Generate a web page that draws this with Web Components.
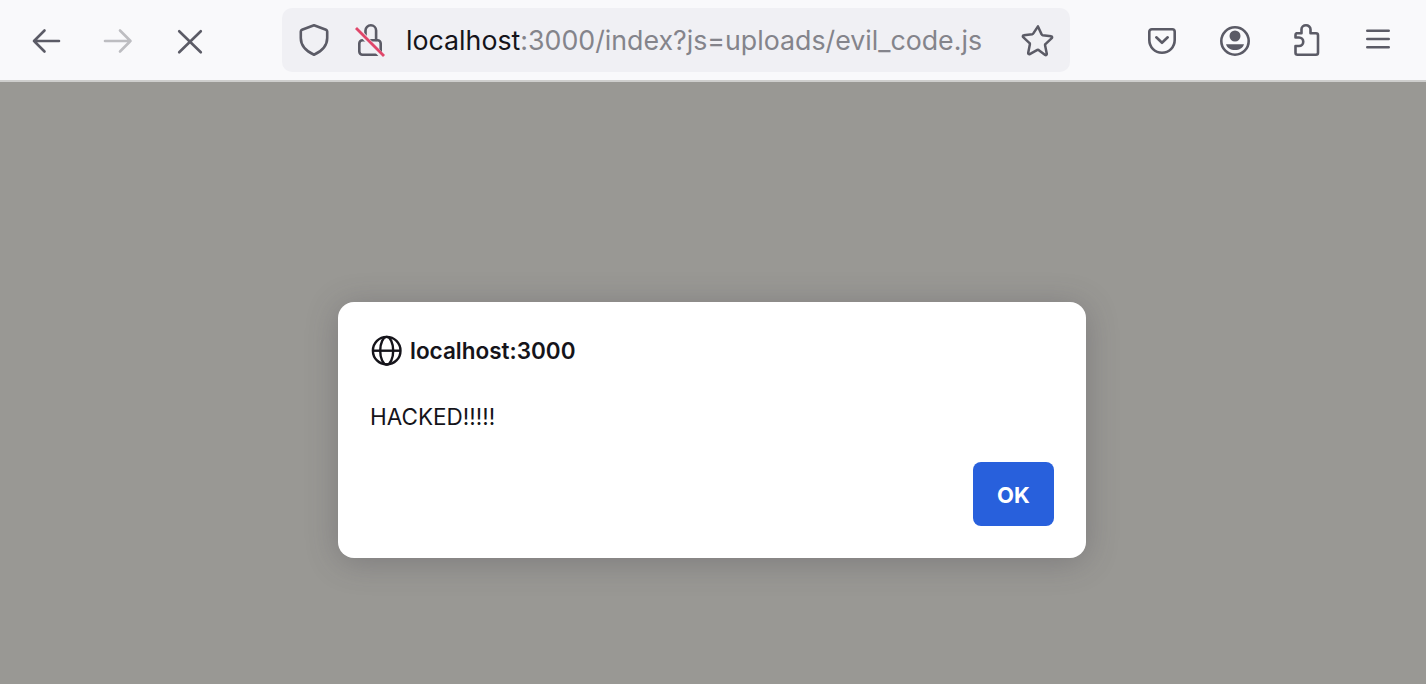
<!DOCTYPE html>
<html lang="en">
<head>
<meta charset="utf-8">
<title>localhost:3000</title>
<style>
  html, body { margin: 0; height: 100%; background: #999894; }
  body { font-family: Inter, "Liberation Sans", sans-serif; overflow: hidden; }
</style>
</head>
<body>
<browser-window>
  <nav-toolbar slot="toolbar">
    <tool-icon slot="nav" icon="back"></tool-icon>
    <tool-icon slot="nav" icon="forward" style="color:#bdbdc1"></tool-icon>
    <tool-icon slot="nav" icon="stop"></tool-icon>
    <url-bar slot="url" host="localhost" rest=":3000/index?js=uploads/evil_code.js"></url-bar>
    <tool-icon slot="actions" icon="pocket"></tool-icon>
    <tool-icon slot="actions" icon="account"></tool-icon>
    <tool-icon slot="actions" icon="puzzle"></tool-icon>
    <tool-icon slot="actions" icon="menu"></tool-icon>
  </nav-toolbar>
  <alert-dialog origin="localhost:3000" button="OK">HACKED!!!!!</alert-dialog>
</browser-window>

<script>
const ICONS = {
  back: '<path d="M29 17H4M14.500 6.500L4 17l10.500 10.500"/>',
  forward: '<path d="M3 17h25.500M18 6.500L28.500 17 18 27.500"/>',
  stop: '<path d="M5.200 7.200l21.600 21.100M26.800 7.200L5.200 28.300"/>',
  shield: '<path d="M16 1.300l12 4.500c.7.300 1.200.9 1.200 1.700V14c0 7-5 13-13.200 16.700C7.800 27 2.800 21 2.800 14V7.500c0-.8.500-1.400 1.200-1.700z"/>',
  star: '<path d="M16 2.500l3.800 8.300c.2.500.6.800 1.100.9l8.900 1.100c1 .1 1.300 1.200.6 1.900l-6.600 6.200c-.4.300-.5.800-.4 1.300l1.800 8.900c.2 1-.8 1.700-1.700 1.200L16.600 27c-.4-.2-.8-.2-1.200 0l-7.900 4.300c-.9.500-1.900-.2-1.700-1.200l1.800-8.900c.1-.5 0-1-.4-1.300L.6 13.700c-.7-.7-.4-1.800.6-1.900l8.900-1.100c.5-.1.900-.4 1.100-.9z" transform="translate(.6 0) scale(.96)"/>',
  pocket: '<path d="M5.800 5.300h20.400c1.400 0 2.500 1.100 2.500 2.500V16c0 7.200-5.700 12.700-12.700 12.700S3.300 23.200 3.300 16V7.800c0-1.400 1.100-2.500 2.500-2.500z"/><path d="M10.300 13.300L16 18.800l5.700-5.500"/>',
  account: '<circle cx="17" cy="17" r="13.700"/><circle cx="17" cy="12" r="5.500" fill="currentColor" stroke="none"/><path d="M8 20.200h18c-1 3.800-4.600 5.800-9 5.800s-8-2-9-5.800z" fill="currentColor" stroke="none"/>',
  puzzle: '<path d="M6.500 9.300h5V5.300a4.500 4 0 0 1 9 0v4h5.500a2 2 0 0 1 2 2v17.400a2 2 0 0 1-2 2H7.500a2 2 0 0 1-2-2V22H9a4 4 0 0 0 0-8.500H5.500V11a1.500 1.700 0 0 1 1-1.700z"/>',
  menu: '<path d="M5.300 6.700h21.400M5.300 15h21.400M5.300 23.300h21.400"/>'
};

class ToolIcon extends HTMLElement {
  constructor() {
    super();
    this.attachShadow({ mode: 'open' });
  }
  connectedCallback() {
    const name = this.getAttribute('icon');
    this.shadowRoot.innerHTML = `
      <style>
        :host { display: block; width: 32px; height: 32px; color: #5b5b66; }
        svg { display: block; width: 32px; height: 32px; fill: none; stroke: currentColor; stroke-width: 2.600; stroke-linecap: round; stroke-linejoin: round; overflow: visible; }
      </style>
      <svg viewBox="0 0 32 32" aria-hidden="true">${ICONS[name] || ''}</svg>
    `;
  }
}
customElements.define('tool-icon', ToolIcon);

class UrlBar extends HTMLElement {
  constructor() {
    super();
    this.attachShadow({ mode: 'open' });
  }
  connectedCallback() {
    this.shadowRoot.innerHTML = `
      <style>
        :host { display: flex; align-items: center; width: 788px; height: 64px; box-sizing: border-box; padding-left: 16px; background: #f0f0f4; border-radius: 10px; }
        .lock { width: 32px; height: 32px; margin-left: 24px; color: #5b5b66; }
        .lock svg { display: block; width: 32px; height: 32px; fill: none; stroke: currentColor; stroke-width: 2.600; stroke-linecap: round; stroke-linejoin: round; overflow: visible; }
        .lock .gap { stroke: #f0f0f4; stroke-width: 5.500; stroke-linecap: butt; }
        .lock .slash { stroke: #e0476a; stroke-width: 2.800; stroke-linecap: butt; }
        .address { margin-left: 20px; font-size: 26.750px; white-space: nowrap; color: #15141a; width: 576px; }
        .address span { color: #84848b; }
        .star { margin-left: 40px; }
      </style>
      <tool-icon icon="shield"></tool-icon>
      <div class="lock">
        <svg viewBox="0 0 32 32" aria-hidden="true">
          <path d="M11.500 16V6.500a5.300 5.200 0 0 1 10.600 0V16"/>
          <rect x="5.300" y="16.300" width="21.400" height="14.400" rx="3.200"/>
          <path class="gap" d="M2 4l26 28"/>
          <path class="slash" d="M2 4l28 28"/>
        </svg>
      </div>
      <div class="address">${this.getAttribute('host')}<span>${this.getAttribute('rest')}</span></div>
      <tool-icon class="star" icon="star"></tool-icon>
    `;
  }
}
customElements.define('url-bar', UrlBar);

class NavToolbar extends HTMLElement {
  constructor() {
    super();
    this.attachShadow({ mode: 'open' });
    this.shadowRoot.innerHTML = `
      <style>
        :host { display: flex; align-items: center; height: 80px; box-sizing: content-box; background: #f9f9fb; border-bottom: 2px solid #cececd; padding-left: 30px; }
        .nav { display: flex; gap: 40px; align-items: center; width: 252px; }
        .actions { display: flex; gap: 40px; align-items: center; margin-left: 76px; }
      </style>
      <div class="nav"><slot name="nav"></slot></div>
      <slot name="url"></slot>
      <div class="actions"><slot name="actions"></slot></div>
    `;
  }
}
customElements.define('nav-toolbar', NavToolbar);

class AlertDialog extends HTMLElement {
  constructor() {
    super();
    this.attachShadow({ mode: 'open' });
  }
  connectedCallback() {
    this.shadowRoot.innerHTML = `
      <style>
        :host { display: flex; flex-direction: column; width: 748px; height: 256px; box-sizing: border-box; padding: 32px; background: #fff; border-radius: 16px; box-shadow: 0 4px 32px rgba(58, 57, 68, .3); color: #15141a; }
        header { display: flex; align-items: center; gap: 8px; height: 32px; font-size: 22.500px; font-weight: 600; }
        header svg { display: block; width: 32px; height: 32px; fill: none; stroke: currentColor; stroke-width: 2.400; }
        .msg { margin-top: 35px; font-size: 22.500px; line-height: 32px; }
        footer { margin-top: auto; display: flex; justify-content: flex-end; }
        button { width: 81px; height: 64px; padding: 2px 0 0; border: 0; border-radius: 8px; background: #2860dc; color: #fff; font: 700 22px Inter, "Liberation Sans", sans-serif; }
      </style>
      <header>
        <svg viewBox="0 0 32 32" aria-hidden="true">
          <circle cx="16.700" cy="16.700" r="13.800"/>
          <ellipse cx="16.700" cy="16.700" rx="6.500" ry="13.800"/>
          <path d="M3 16.700h27.500"/>
        </svg>
        <span>${this.getAttribute('origin')}</span>
      </header>
      <div class="msg"><slot></slot></div>
      <footer><button type="button">${this.getAttribute('button')}</button></footer>
    `;
  }
}
customElements.define('alert-dialog', AlertDialog);

class BrowserWindow extends HTMLElement {
  constructor() {
    super();
    this.attachShadow({ mode: 'open' });
    this.shadowRoot.innerHTML = `
      <style>
        :host { display: flex; flex-direction: column; height: 684px; background: #999894; }
        main { flex: 1; padding: 220px 0 0 338px; }
      </style>
      <slot name="toolbar"></slot>
      <main><slot></slot></main>
    `;
  }
}
customElements.define('browser-window', BrowserWindow);
</script>
</body>
</html>
